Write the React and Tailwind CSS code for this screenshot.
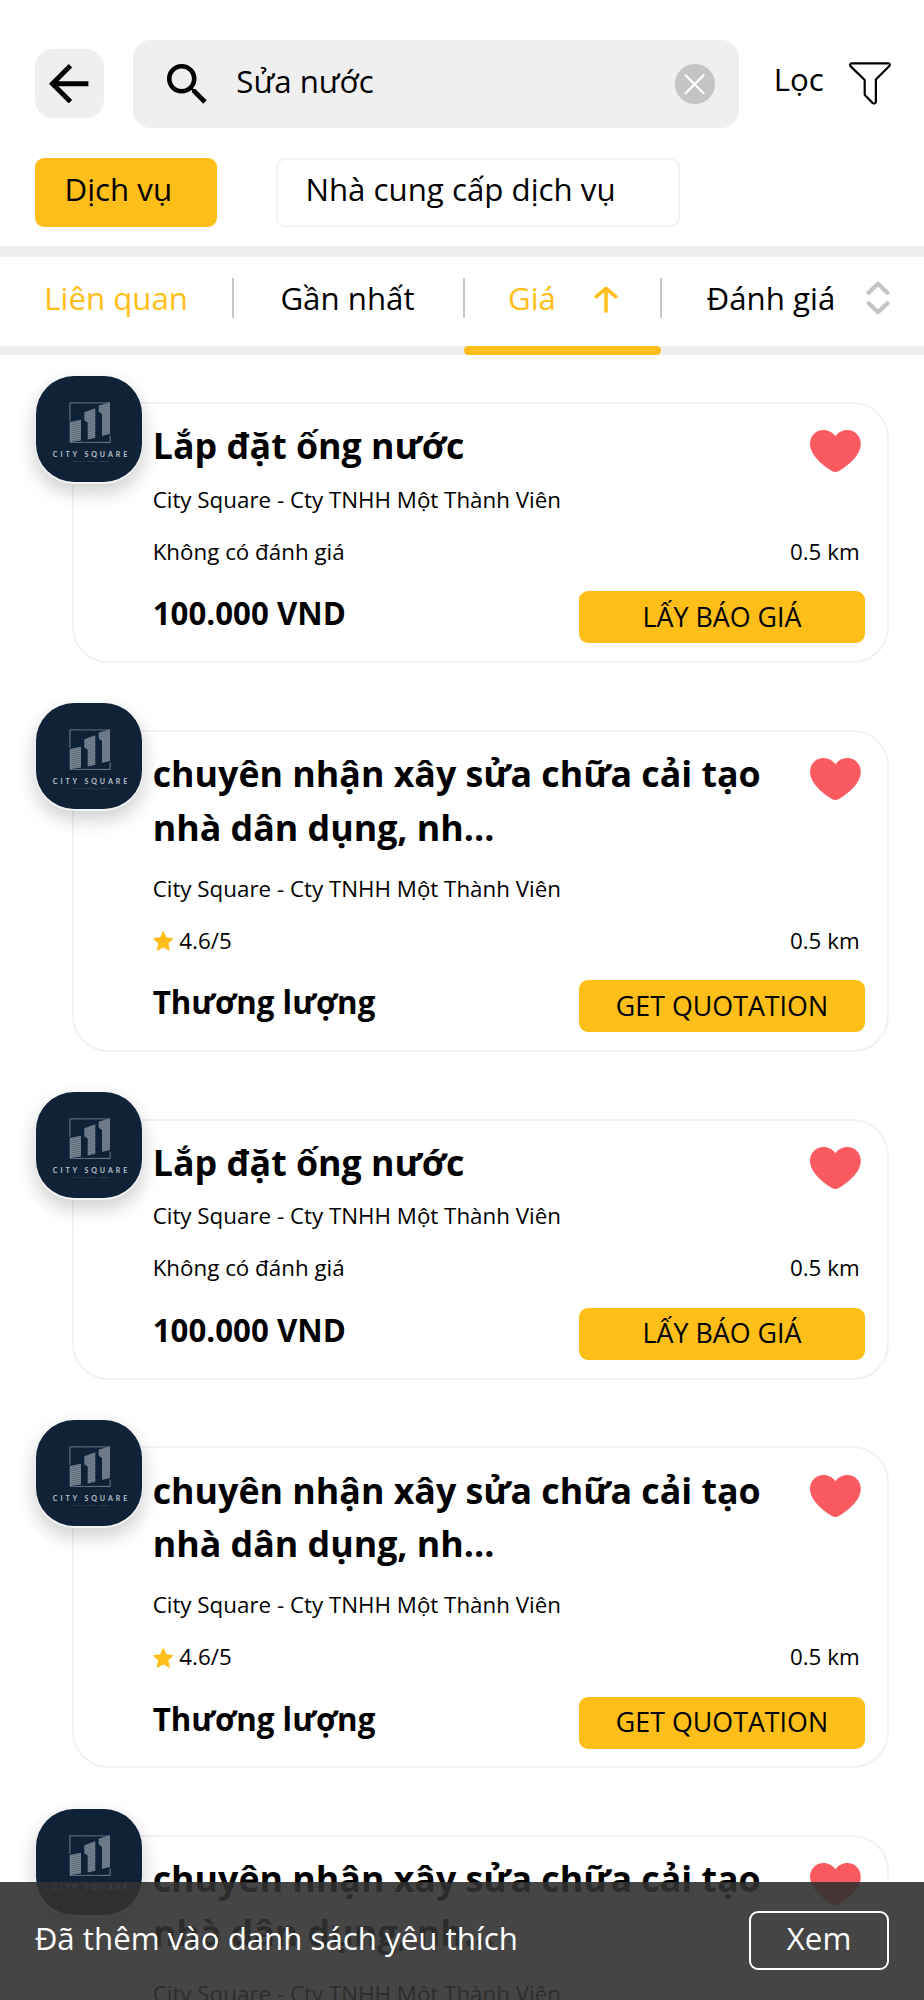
import React from "react";

function BackIcon() {
  return (
    <svg width="39.4" height="39.4" viewBox="4 4 16 16" fill="#000">
      <path d="M20 11H7.83l5.59-5.59L12 4l-8 8 8 8 1.41-1.41L7.83 13H20v-2z" />
    </svg>
  );
}

function SearchIcon() {
  return (
    <svg width="39.7" height="39.7" viewBox="3 3 17.5 17.5" fill="#000">
      <path d="M15.5 14h-.79l-.28-.27A6.471 6.471 0 0 0 16 9.5 6.5 6.5 0 1 0 9.5 16c1.61 0 3.09-.59 4.23-1.57l.27.28v.79l5 4.99L20.49 19l-4.99-5zm-6 0C7.01 14 5 11.99 5 9.5S7.01 5 9.5 5 14 7.01 14 9.5 11.99 14 9.5 14z" />
    </svg>
  );
}

function ClearIcon() {
  return (
    <svg width="40" height="40" viewBox="0 0 40 40">
      <circle cx="20" cy="20" r="20" fill="#c4c4c4" />
      <path d="M10.6 11.2L28.6 29.2M28.6 11.2L10.6 29.2" stroke="#fff" strokeWidth="2.2" strokeLinecap="round" />
    </svg>
  );
}

function FilterIcon() {
  return (
    <svg width="42" height="43" viewBox="0 0 42 43" fill="none" stroke="#000" strokeWidth="2.2" strokeLinejoin="round">
      <path d="M2.6 1.3H39.4C40.8 1.3 41.2 2.9 40.3 4L26.9 17.6V39.6C26.9 41.4 24.8 42 23.6 41L16.3 33.6C15.8 33.1 15.7 32.9 15.7 32.2V18L1.7 4.4C.7 3.2 1.1 1.3 2.6 1.3Z" />
    </svg>
  );
}

function ArrowUpIcon() {
  return (
    <svg width="24" height="28" viewBox="0 0 24 28" fill="none" stroke="#ffbe18" strokeWidth="3.5" strokeLinecap="round" strokeLinejoin="round">
      <path d="M12 25.2V2.6M2.2 10.7L12 2.4L21.8 10.7" />
    </svg>
  );
}

function SortIcon() {
  return (
    <svg width="24" height="34" viewBox="0 0 24 34" fill="none" stroke="#c4c4c4" strokeWidth="4.2" strokeLinecap="round" strokeLinejoin="round">
      <path d="M2.6 11.8L12 2.7L21.4 11.8M2.6 22.2L12 31.3L21.4 22.2" />
    </svg>
  );
}

function HeartIcon() {
  return (
    <svg className="mt-[11px] mr-[4px] shrink-0" width="51" height="42" viewBox="0 0 51 42" fill="#fb5a61">
      <path d="M25.4 6.2C22.5 2.3 18.2 0 13.7 0C5.8 0 0 6 0 14C0 24 10.5 34.6 22.3 41.2C24.3 42.2 26.5 42.2 28.5 41.2C40.3 34.6 50.8 24 50.8 14C50.8 6 45 0 37.1 0C32.6 0 28.3 2.3 25.4 6.2Z" />
    </svg>
  );
}

function StarIcon() {
  return (
    <svg width="20.6" height="20" viewBox="0 0 20.6 20" fill="#ffbe18" stroke="#ffbe18" strokeWidth="1.2" strokeLinejoin="round">
      <path d="M10.3 .8L13 6.8L19.8 7.6L14.8 12.1L16.2 19.1L10.3 15.7L4.4 19.1L5.8 12.1L.8 7.6L7.6 6.8Z" />
    </svg>
  );
}

function CompanyLogo() {
  const lines = Array.from({ length: 22 }, (_, i) => 25 + i * 2);
  return (
    <div className="absolute -top-[28.4px] -left-[38.4px] h-[106px] w-[106px] rounded-[38px] bg-[#0f2238] shadow-[0_1.4px_0_0.6px_#f3f3f3,0_9px_18px_2px_rgba(0,0,0,0.18)]">
      <svg width="106" height="106" viewBox="0 0 106 106">
        <path d="M33.9 45V26.9H74.1M74.1 59.5V66.4H33.9" fill="none" stroke="#74818f" strokeWidth="1" />
        <path
          d="M33.7 46L45 43.7V64.6L33.7 66.3ZM48.3 36.3L59.3 32.3V61.7L51.7 63.5V46.5L48.3 44.5ZM62.7 29.5L73.9 26.6V58L66 60V38L62.7 35.5Z"
          fill="#7d8895"
        />
        <g stroke="#0f2238" strokeWidth="0.5" opacity="0.55">
          {lines.map((y) => (
            <path key={y} d={`M34.6 ${y + 4}L73.4 ${y - 3}`} />
          ))}
        </g>
        <text x="16.8" y="80.8" textLength="74.5" fontSize="7.1" fontWeight="700" fill="#b9c0c8" fontFamily="Lato, sans-serif">
          CITY SQUARE
        </text>
        <text x="36" y="86.4" textLength="36.5" fontSize="2.6" fill="#66727f" fontFamily="Lato, sans-serif">
          YOUR SLOGAN HERE
        </text>
      </svg>
    </div>
  );
}

function ServiceCard({ title, twoLines, rating, price, action }) {
  return (
    <article
      className={`relative flex w-[817px] shrink-0 flex-col rounded-[36px] border-2 border-[#f2f2f2] bg-white pt-[15.3px] pr-[22px] pl-[78.7px] ${
        twoLines ? "h-[322px]" : "h-[261px]"
      }`}
    >
      <CompanyLogo />
      <div className={`flex shrink-0 items-start justify-between ${twoLines ? "h-[126.8px]" : "h-[65.5px]"}`}>
        <h2 className="w-[640px] text-[35.75px] leading-[53.7px] font-bold">{title}</h2>
        <HeartIcon />
      </div>
      <p className="h-[52px] shrink-0 text-[22.35px] leading-[30.4px]">City Square - Cty TNHH Một Thành Viên</p>
      <div className="flex h-[54.4px] shrink-0 items-start justify-between pr-[5.4px] text-[22.35px] leading-[30.4px]">
        {rating ? (
          <span className="flex items-center gap-[6px]">
            <StarIcon />
            {rating}
          </span>
        ) : (
          <span>Không có đánh giá</span>
        )}
        <span>0.5 km</span>
      </div>
      <div className="flex items-start justify-between">
        <strong className="mt-[1px] text-[31.25px] leading-[43px] font-bold">{price}</strong>
        <button className="h-[52px] w-[286px] rounded-[9px] bg-[#ffbe18] pb-[1px] text-[26.8px] leading-[50px]">{action}</button>
      </div>
    </article>
  );
}

function Divider() {
  return <div className="h-[40px] w-[2px] shrink-0 bg-[#c6c6c6]" />;
}

const pipes = { title: "Lắp đặt ống nước", price: "100.000 VND", action: "LẤY BÁO GIÁ" };
const repair = {
  title: "chuyên nhận xây sửa chữa cải tạo nhà dân dụng, nh...",
  twoLines: true,
  rating: "4.6/5",
  price: "Thương lượng",
  action: "GET QUOTATION",
};
const services = [pipes, repair, pipes, repair, repair];

export default function App() {
  return (
    <div className="relative flex h-[2000px] w-[924px] flex-col overflow-hidden bg-white font-['Open_Sans',sans-serif] text-[31.25px] leading-[42px] text-black">
      <header className="mt-[39.5px] flex h-[88.5px] shrink-0 items-center pl-[34.7px]">
        <button className="flex h-[69px] w-[69px] items-center justify-center rounded-[18px] bg-[#efefef]">
          <BackIcon />
        </button>
        <div className="ml-[29.6px] flex h-full w-[606px] items-center rounded-[18px] bg-[#efefef] pr-[24.6px] pl-[34px]">
          <SearchIcon />
          <span className="ml-[29.4px] flex-1 pb-[5px]">Sửa nước</span>
          <ClearIcon />
        </div>
        <span className="ml-[34.4px] pb-[10px]">Lọc</span>
        <span className="ml-[24.8px]">
          <FilterIcon />
        </span>
      </header>

      <div className="mt-[30px] flex h-[69px] shrink-0 gap-[59px] pl-[34.7px]">
        <button className="flex w-[182.3px] items-center rounded-[9px] bg-[#ffbe18] pb-[7px] pl-[29.8px]">Dịch vụ</button>
        <button className="flex w-[404px] items-center rounded-[9px] border-2 border-[#f2f2f2] pb-[7px] pl-[27.4px]">
          Nhà cung cấp dịch vụ
        </button>
      </div>

      <div className="mt-[19px] h-[11px] shrink-0 bg-[#efefef]" />
      <nav className="flex h-[89px] shrink-0 items-center pb-[7.6px]">
        <span className="w-[232px] pl-[44.2px] text-[#ffbe18]">Liên quan</span>
        <Divider />
        <span className="w-[229.4px] pl-[46.4px]">Gần nhất</span>
        <Divider />
        <span className="flex w-[195px] items-center pl-[42.6px] text-[#ffbe18]">
          Giá
          <span className="mt-[4px] ml-[38.4px]">
            <ArrowUpIcon />
          </span>
        </span>
        <Divider />
        <span className="flex items-center pl-[44.2px]">
          Đánh giá
          <span className="mt-[1px] ml-[30.9px]">
            <SortIcon />
          </span>
        </span>
      </nav>
      <div className="h-[9px] shrink-0 bg-[#efefef] pl-[464px]">
        <div className="h-full w-[197px] rounded-full bg-[#ffbe18]" />
      </div>

      <main className="mt-[47px] ml-[72px] flex flex-col gap-[66.8px]">
        {services.map((service, i) => (
          <ServiceCard key={i} {...service} />
        ))}
      </main>

      <div className="absolute inset-x-0 bottom-0 flex h-[118.4px] items-center justify-between bg-[#313131]/90 pr-[34.7px] pl-[34.7px] text-white">
        <span className="pb-[6px]">Đã thêm vào danh sách yêu thích</span>
        <button className="flex h-[59px] w-[140.5px] items-center justify-center rounded-[9px] border-2 border-white pb-[6px]">
          Xem
        </button>
      </div>
    </div>
  );
}
